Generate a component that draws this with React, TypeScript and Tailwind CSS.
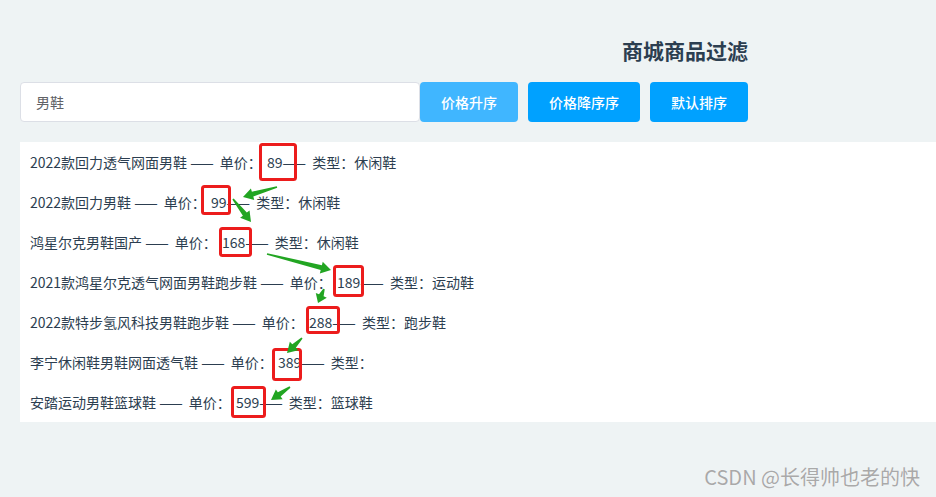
import React from 'react'

const goods = [
  { name: '2022款回力透气网面男鞋', price: 89, type: '休闲鞋' },
  { name: '2022款回力男鞋', price: 99, type: '休闲鞋' },
  { name: '鸿星尔克男鞋国产', price: 168, type: '休闲鞋' },
  { name: '2021款鸿星尔克透气网面男鞋跑步鞋', price: 189, type: '运动鞋' },
  { name: '2022款特步氢风科技男鞋跑步鞋', price: 288, type: '跑步鞋' },
  { name: '李宁休闲鞋男鞋网面透气鞋', price: 389, type: '' },
  { name: '安踏运动男鞋篮球鞋', price: 599, type: '篮球鞋' },
]

// annotation boxes around prices: x1, y1, x2, y2
const boxes = [
  [259, 143, 297, 181],
  [201, 185, 231, 215],
  [219, 227, 252, 257],
  [333, 265, 364, 297],
  [306, 306, 340, 334],
  [272, 348, 302, 381],
  [231, 386, 266, 418],
]

// arrows: tail -> tip
const arrows = [
  [277, 187, 243, 197],
  [233, 199, 251, 222],
  [267, 254, 331, 270],
  [324, 289, 318, 303],
  [302, 338, 287, 353],
  [290, 387, 271, 400],
]

function arrowPoints(tx: number, ty: number, px: number, py: number) {
  const dx = px - tx
  const dy = py - ty
  const len = Math.hypot(dx, dy)
  const ux = dx / len
  const uy = dy / len
  const nx = -uy
  const ny = ux
  const head = Math.min(10, len * 0.55)
  const bx = px - ux * head
  const by = py - uy * head
  const pts = [
    [tx + nx * 0.8, ty + ny * 0.8],
    [bx + nx * 2.5, by + ny * 2.5],
    [bx + nx * 6, by + ny * 6],
    [px, py],
    [bx - nx * 6, by - ny * 6],
    [bx - nx * 2.5, by - ny * 2.5],
    [tx - nx * 0.8, ty - ny * 0.8],
  ]
  return pts.map((p) => p.join(',')).join(' ')
}

function Dash() {
  return <span className="tracking-[3px]">——</span>
}

export default function App() {
  return (
    <div
      className="relative min-h-screen w-full overflow-hidden bg-[#eef3f4] text-[#2c3e50]"
      style={{ fontFamily: '"Noto Sans CJK SC", "Noto Sans", sans-serif' }}
    >
      <div className="flex w-[748px] justify-end pl-5 pt-[36px]">
        <h1 className="text-[21px] font-bold leading-[28px]">商城商品过滤</h1>
      </div>

      <div className="mt-[18px] flex items-center pl-5">
        <input
          defaultValue="男鞋"
          className="h-10 w-[400px] rounded border border-[#dcdfe6] bg-white px-[15px] text-[14px] text-[#606266] outline-none"
        />
        <button className="h-10 w-[98px] rounded bg-[#40b6ff] text-[14px] font-medium text-white">
          价格升序
        </button>
        <button className="ml-[10px] h-10 w-[112px] rounded bg-[#00a1ff] text-[14px] font-medium text-white">
          价格降序序
        </button>
        <button className="ml-[10px] h-10 w-[98px] rounded bg-[#00a1ff] text-[14px] font-medium text-white">
          默认排序
        </button>
      </div>

      <ul className="ml-5 mt-5 bg-white pl-[10px]">
        {goods.map((g) => (
          <li key={g.name} className="flex h-10 items-center whitespace-pre text-[14px] text-[#2c3e50]">
            {g.name} <Dash /> 单价： <span className="ml-[2px]">{g.price}</span> <Dash /> 类型：{g.type}
          </li>
        ))}
      </ul>

      <div className="absolute bottom-[7px] right-[16px] text-[20px] leading-[26px] text-[#a9a9a9] [text-shadow:0_0_1px_#fff]">
        CSDN @长得帅也老的快
      </div>

      <svg className="pointer-events-none absolute left-0 top-0" width="936" height="497">
        {boxes.map(([x1, y1, x2, y2], i) => (
          <rect
            key={i}
            x={x1 + 1.5}
            y={y1 + 1.5}
            width={x2 - x1 - 3}
            height={y2 - y1 - 3}
            rx="2"
            fill="none"
            stroke="#ec1c1c"
            strokeWidth="3"
          />
        ))}
        {arrows.map(([tx, ty, px, py], i) => (
          <polygon key={i} points={arrowPoints(tx, ty, px, py)} fill="#22a522" />
        ))}
      </svg>
    </div>
  )
}
